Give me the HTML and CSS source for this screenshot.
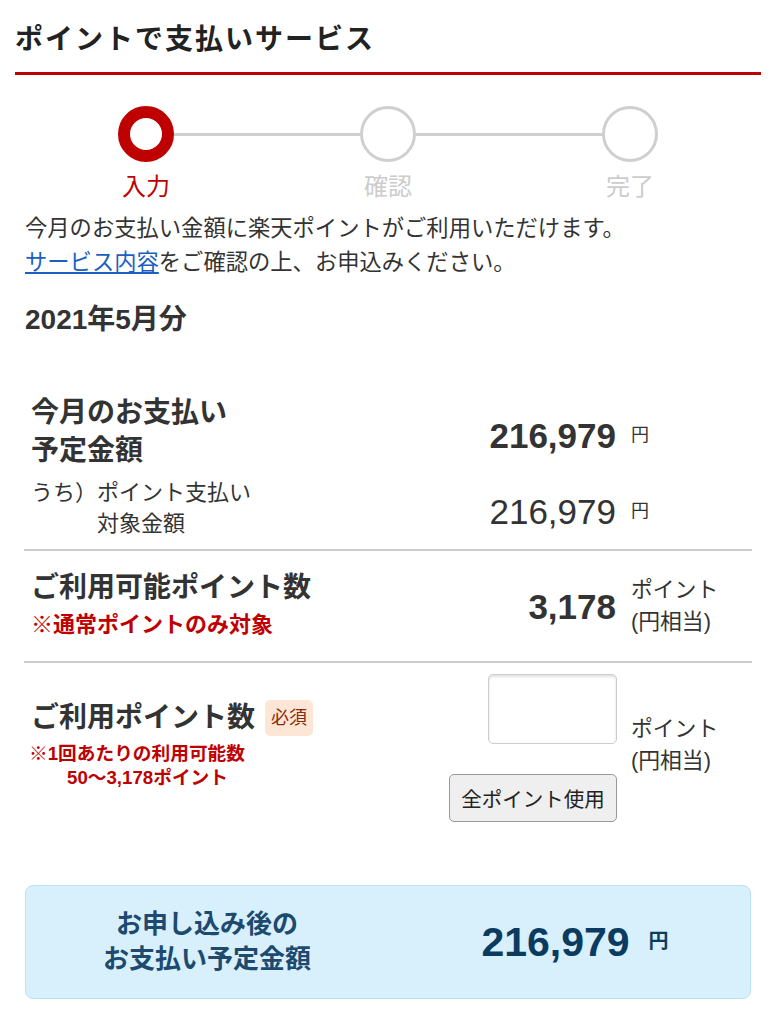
FILE: index.html
```html
<!DOCTYPE html>
<html lang="ja">
<head>
<meta charset="utf-8">
<title>ポイントで支払いサービス</title>
<link rel="stylesheet" href="styles.css">
</head>
<body>
<div class="page">
  <h1 class="title">ポイントで支払いサービス</h1>

  <div class="stepper">
    <div class="steps">
      <span class="dot active"></span><span class="bar"></span><span class="dot"></span><span class="bar"></span><span class="dot"></span>
    </div>
    <div class="step-labels">
      <span class="active">入力</span><span>確認</span><span>完了</span>
    </div>
  </div>

  <p class="intro">今月のお支払い金額に楽天ポイントがご利用いただけます。<br><a href="#">サービス内容</a>をご確認の上、お申込みください。</p>

  <h2 class="month">2021年5月分</h2>

  <div class="sections">
    <section class="sec sec1">
      <div class="row row-a">
        <div class="label strong">今月のお支払い<br>予定金額</div>
        <div class="value">
          <span class="num">216,979</span><span class="unit yen">円</span>
        </div>
      </div>
      <div class="row row-b">
        <div class="label sub">うち）ポイント支払い<br>対象金額</div>
        <div class="value">
          <span class="num regular">216,979</span><span class="unit yen">円</span>
        </div>
      </div>
    </section>

    <section class="sec sec2">
      <div class="row">
        <div class="label">
          <div class="strong tight">ご利用可能ポイント数</div>
          <div class="red-note">※通常ポイントのみ対象</div>
        </div>
        <div class="value pt">
          <span class="num">3,178</span><span class="unit">ポイント<br>(円相当)</span>
        </div>
      </div>
    </section>

    <section class="sec sec3">
      <div class="row">
        <div class="label use-label">
          <div class="need-line"><span class="strong">ご利用ポイント数</span><span class="badge">必須</span></div>
          <div class="small-note">※1回あたりの利用可能数<span class="note-2">50〜3,178ポイント</span></div>
        </div>
        <div class="value pt">
          <div class="controls">
            <input class="point-input" type="text" aria-label="ご利用ポイント数">
            <button class="all-btn" type="button">全ポイント使用</button>
          </div>
          <span class="unit unit-lift">ポイント<br>(円相当)</span>
        </div>
      </div>
    </section>
  </div>

  <div class="summary">
    <div class="sum-label">お申し込み後の<br>お支払い予定金額</div>
    <div class="sum-value"><span class="sum-num">216,979</span><span class="sum-yen">円</span></div>
  </div>
</div>
</body>
</html>
```

FILE: styles.css
```css
* { box-sizing: border-box; }

body {
  margin: 0;
  background: #fff;
  color: #333;
  font-family: "Liberation Sans", "Noto Sans CJK JP", sans-serif;
}

.page {
  padding: 0 15px;
}

.title {
  margin: 0;
  padding: 20px 0 12px 0;
  font-size: 28px;
  line-height: 40px;
  font-weight: 700;
  letter-spacing: 2px;
  color: #222;
  border-bottom: 3px solid #bf0000;
}

/* stepper */
.stepper {
  margin: 31px 10px 0;
}

.steps {
  display: flex;
  align-items: center;
  padding: 0 93px;
}

.dot {
  flex: none;
  width: 56px;
  height: 56px;
  border-radius: 50%;
  border: 3px solid #cfcfcf;
}

.dot.active {
  border: 12px solid #bf0000;
}

.bar {
  flex: 1;
  height: 3px;
  background: #cfcfcf;
}

.step-labels {
  display: grid;
  grid-template-columns: repeat(3, 1fr);
  margin-top: 9px;
  text-align: center;
  font-size: 24px;
  line-height: 32px;
  color: #cccccc;
}

.step-labels .active {
  color: #bf0000;
}

/* intro */
.intro {
  margin: 9px 10px 0;
  font-size: 22.3px;
  line-height: 34px;
  color: #333;
}

.intro a {
  color: #1a5fc1;
  text-decoration: underline;
}

.month {
  margin: 20px 10px 0;
  font-size: 28px;
  line-height: 40px;
  font-weight: 700;
  color: #333;
}

/* sections */
.sections {
  margin: 54px 9px 0;
}

.sec1 {
  padding: 0 7px 10px;
  border-bottom: 2px solid #cccccc;
}

.sec2 {
  padding: 18px 7px 18px;
  border-bottom: 2px solid #cccccc;
}

.sec3 {
  padding: 11px 7px 0;
}

.row {
  display: flex;
  align-items: center;
}

.row-b {
  margin-top: 7px;
}

.label {
  flex: 1;
}

.strong {
  font-size: 28px;
  line-height: 38px;
  font-weight: 700;
  color: #333;
}

.strong.tight {
  line-height: 37px;
}

.label.sub {
  font-size: 22px;
  line-height: 31px;
  padding-left: 3em;
  text-indent: -3em;
}

.red-note {
  font-size: 22px;
  line-height: 37px;
  font-weight: 700;
  color: #bf0000;
}

.value {
  display: flex;
  align-items: flex-start;
  margin-top: 7px;
}

.value.pt {
  align-items: center;
  margin-top: 0;
}

.num {
  font-size: 35px;
  line-height: 35px;
  font-weight: 700;
  color: #333;
}

.num.regular {
  font-weight: 400;
}

.unit {
  width: 129px;
  padding-left: 15px;
  font-size: 21.8px;
  line-height: 32px;
  color: #333;
}

.unit.yen {
  font-size: 18px;
  line-height: 18px;
  margin-top: 8px;
}

.unit-lift {
  margin-bottom: 7px;
}

/* section 3 */
.use-label {
  align-self: flex-start;
  margin-top: 25px;
}

.need-line {
  display: flex;
  align-items: center;
  gap: 10px;
}

.badge {
  display: inline-block;
  height: 36px;
  padding: 0 6px;
  line-height: 36px;
  font-size: 18px;
  color: #8a2b0b;
  background: #fde6d6;
  border-radius: 5px;
}

.small-note {
  margin-top: 5px;
  margin-left: -2px;
  font-size: 18.7px;
  line-height: 24px;
  font-weight: 700;
  color: #bf0000;
}

.note-2 {
  display: block;
  padding-left: 38px;
}

.controls {
  display: flex;
  flex-direction: column;
  align-items: flex-end;
  gap: 30px;
  margin-right: -1px;
}

.point-input {
  display: block;
  width: 129px;
  height: 70px;
  margin: 0;
  padding: 0 8px;
  border: 1.5px solid #cccccc;
  border-radius: 5px;
  box-shadow: inset 0 2px 3px rgba(0, 0, 0, 0.12);
  background: #fff;
  font-size: 22px;
  font-family: inherit;
}

.all-btn {
  display: block;
  width: 168px;
  height: 48px;
  margin: 0;
  padding: 0;
  border: 1.5px solid #999999;
  border-radius: 5px;
  background: #efefef;
  font-family: "Liberation Sans", "Noto Sans CJK JP", sans-serif;
  font-size: 20.5px;
  color: #222;
}

/* summary */
.summary {
  display: grid;
  grid-template-columns: 1fr 1fr;
  align-items: center;
  margin: 63px 10px 0;
  padding: 21px 0;
  background: #d7f0fc;
  border: 1.5px solid #b8e2f6;
  border-radius: 8px;
}

.sum-label {
  text-align: center;
  font-size: 26px;
  line-height: 35px;
  font-weight: 700;
  color: #1d4a6e;
}

.sum-value {
  display: flex;
  justify-content: center;
  align-items: flex-start;
  padding-left: 12px;
  color: #0c3b60;
}

.sum-num {
  font-size: 41px;
  line-height: 41px;
  font-weight: 700;
}

.sum-yen {
  margin-left: 19px;
  margin-top: 9px;
  font-size: 20px;
  line-height: 20px;
  font-weight: 700;
}
```
